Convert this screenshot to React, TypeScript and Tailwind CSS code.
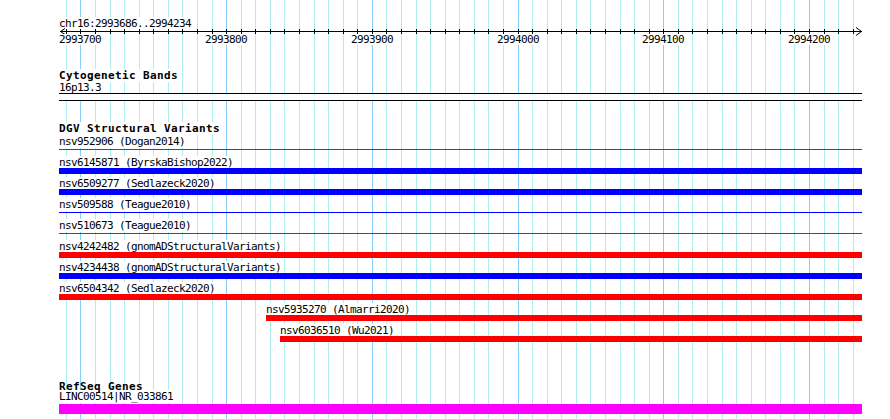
import React from 'react'

const START = 2993686
const END = 2994234
const X0 = 60
const PX_PER_BP = 800 / (END - START + 1)

const bpToX = (bp: number) => Math.round(X0 + (bp - START) * PX_PER_BP)

// grid every 10bp, major every 100bp
const gridBps: number[] = []
for (let bp = 2993690; bp <= END; bp += 10) gridBps.push(bp)
const majorBps = gridBps.filter(bp => bp % 100 === 0)

type Variant = {
  label: string
  color: 'red' | 'blue'
  thick: boolean
  offset: string
  width: string
}

const variants: Variant[] = [
  { label: 'nsv952906 (Dogan2014)', color: 'red', thick: false, offset: 'ml-0', width: 'w-[803px]' },
  { label: 'nsv6145871 (ByrskaBishop2022)', color: 'blue', thick: true, offset: 'ml-0', width: 'w-[803px]' },
  { label: 'nsv6509277 (Sedlazeck2020)', color: 'blue', thick: true, offset: 'ml-0', width: 'w-[803px]' },
  { label: 'nsv509588 (Teague2010)', color: 'blue', thick: false, offset: 'ml-0', width: 'w-[803px]' },
  { label: 'nsv510673 (Teague2010)', color: 'red', thick: false, offset: 'ml-0', width: 'w-[803px]' },
  { label: 'nsv4242482 (gnomADStructuralVariants)', color: 'red', thick: true, offset: 'ml-0', width: 'w-[803px]' },
  { label: 'nsv4234438 (gnomADStructuralVariants)', color: 'blue', thick: true, offset: 'ml-0', width: 'w-[803px]' },
  { label: 'nsv6504342 (Sedlazeck2020)', color: 'red', thick: true, offset: 'ml-0', width: 'w-[803px]' },
  { label: 'nsv5935270 (Almarri2020)', color: 'red', thick: true, offset: 'ml-[207px]', width: 'w-[596px]' },
  { label: 'nsv6036510 (Wu2021)', color: 'red', thick: true, offset: 'ml-[221px]', width: 'w-[582px]' },
]

const small = 'text-[11px] tracking-[-0.62px] bg-white'
const bold = 'text-[11px] font-bold tracking-[0.38px] bg-white'

export default function App() {
  return (
    <div className="relative w-[890px] h-[419px] overflow-hidden bg-white text-black font-['DejaVu_Sans_Mono',monospace]">
      {/* GRID */}
      <svg className="absolute inset-0" width={890} height={419} shapeRendering="crispEdges">
        {gridBps.map(bp => {
          const x = bpToX(bp) + 0.5
          return (
            <line
              key={bp}
              x1={x}
              x2={x}
              y1={0}
              y2={419}
              stroke={bp % 100 === 0 ? '#87cefa' : '#afeeee'}
              strokeWidth={1}
            />
          )
        })}
      </svg>

      <div className="relative flex flex-col pl-[59px] pt-[16px]">
        {/* RULER */}
        <div className="h-[12px] leading-[11px]">
          <span className={small}>chr16:2993686..2994234</span>
        </div>
        <div className="h-[6px] w-[803px]">
          <svg width={803} height={6} overflow="visible" shapeRendering="crispEdges">
            <line x1={1} x2={803} y1={3.5} y2={3.5} stroke="#000" />
            {gridBps.map(bp => {
              const x = bpToX(bp) - 59 + 0.5
              return <line key={bp} x1={x} x2={x} y1={1} y2={6} stroke="#000" />
            })}
            <polyline points="6,0.5 1.5,3.5 6,6.5" fill="none" stroke="#000" shapeRendering="auto" />
            <polyline points="797,-0.5 802.5,3.5 797,7.5" fill="none" stroke="#000" shapeRendering="auto" />
          </svg>
        </div>
        <div className="relative h-[13px] leading-[11px]">
          {majorBps.map(bp => (
            <span
              key={bp}
              className={`absolute top-0 ${small}`}
              style={{ left: bpToX(bp) - 59 - 21 }}
            >
              {bp}
            </span>
          ))}
        </div>

        {/* CYTOGENETIC BANDS */}
        <div className="h-[21px]" />
        <div className="h-[12px] leading-[12px]">
          <span className={bold}>Cytogenetic Bands</span>
        </div>
        <div className="h-[13px] leading-[12px]">
          <span className={small}>16p13.3</span>
        </div>
        <div className="h-[8px] w-[803px] border-y border-black bg-white" />

        {/* DGV */}
        <div className="h-[20px]" />
        <div className="h-[14px] leading-[12px]">
          <span className={bold}>DGV Structural Variants</span>
        </div>
        {variants.map(v => (
          <div key={v.label} className={`flex flex-col h-[21px] ${v.offset}`}>
            <div className="h-[13px] leading-[10px]">
              <span className={small}>{v.label}</span>
            </div>
            <div
              className={`${v.width} ${v.thick ? 'mt-[-1px] h-[6px]' : 'mt-[1px] h-[1px]'} ${
                v.color === 'red' ? 'bg-[#ff0000]' : 'bg-[#0000ff]'
              }`}
            />
          </div>
        ))}

        {/* REFSEQ */}
        <div className="h-[35px]" />
        <div className="h-[11px] leading-[10px]">
          <span className="relative z-10 text-[11px] font-bold tracking-[0.38px]">RefSeq Genes</span>
        </div>
        <div className="h-[13px] leading-[10px]">
          <span className={`relative -top-[1px] ${small}`}>LINC00514|NR_033861</span>
        </div>
        <div className="h-[10px] w-[803px] bg-[#ff00ff]" />
      </div>
    </div>
  )
}
